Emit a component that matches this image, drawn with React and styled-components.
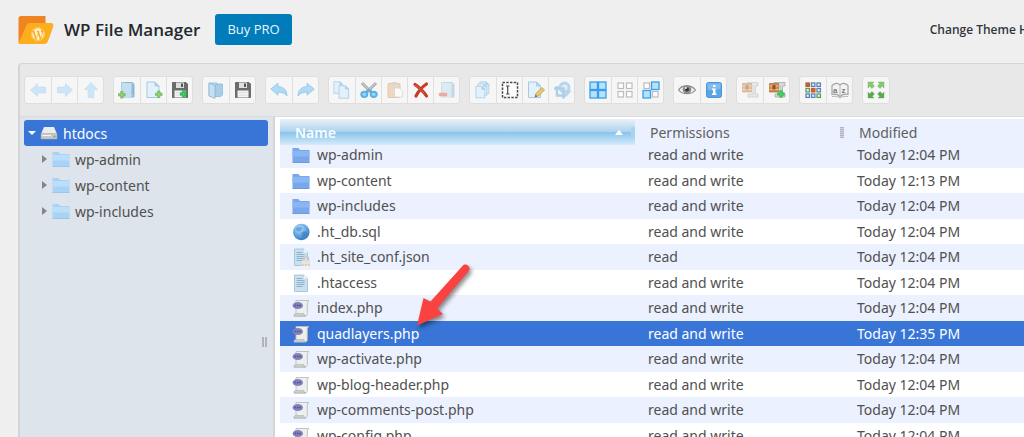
import React, { useState } from "react";
import styled, { createGlobalStyle } from "styled-components";
import { FaWordpress } from "react-icons/fa";

const GlobalStyle = createGlobalStyle`
  * {
    box-sizing: border-box;
  }

  body {
    margin: 0;
    overflow: hidden;
    background: #efefef;
  }
`;

const Page = styled.div`
  position: relative;
  overflow: hidden;
  font-family: "Noto Sans", "DejaVu Sans", sans-serif;
  font-size: 14px;
  color: #505050;
`;

const Header = styled.header`
  display: flex;
  align-items: center;
  height: 63px;
  padding: 0 0 4px 18px;
  font-family: "Open Sans", sans-serif;
`;

const Title = styled.h1`
  margin: 0 15px 0 10px;
  color: #23282d;
  font-size: 17px;
  font-weight: 600;
  white-space: nowrap;
`;

const BuyLink = styled.a`
  padding: 0 12px;
  border-radius: 3px;
  background: #007cba;
  color: #e8f5fc;
  font-size: 13px;
  line-height: 31px;
  text-decoration: none;
  white-space: nowrap;
`;

const ThemeLabel = styled.span`
  margin: 0 -4px 0 auto;
  color: #32373c;
  font-size: 12px;
  font-weight: 600;
  white-space: nowrap;
`;

const Manager = styled.main`
  margin-left: 18px;
  border: 2px solid #d4d5d7;
  border-width: 1px 0 0 2px;
  border-radius: 4px 0 0 0;
  background: #e8e8e8;
`;

const Toolbar = styled.div`
  display: flex;
  gap: 9px;
  height: 52px;
  padding: 12px 0 0 4px;
`;

const ButtonGroup = styled.div`
  display: flex;
  height: 28px;
  border: 1px solid #dedede;
  border-radius: 3px;
  background: #f6f6f6;
`;

const ToolButton = styled.button`
  display: flex;
  align-items: center;
  justify-content: center;
  width: 26px;
  padding: 0;
  border: 0;
  background: transparent;

  & + & {
    border-left: 1px solid #e0e0e0;
  }

  svg {
    flex: none;
    opacity: ${(props) => (props.$dim ? 0.5 : 1)};
  }
`;

const Workzone = styled.div`
  display: flex;
  height: 450px;
  border-top: 1px solid #dcdcdc;
`;

const Sidebar = styled.nav`
  position: relative;
  flex: none;
  width: 255px;
  padding: 3px 5px 0 4px;
  border-right: 2px solid #d3d6d9;
  background: #dde4eb;
`;

const TreeList = styled.ul`
  margin: 0;
  padding: 0;
  list-style: none;
`;

const TreeLink = styled.a`
  display: flex;
  align-items: center;
  height: 26px;
  padding-left: ${(props) => (props.$root ? 4 : 17)}px;
  border-radius: 3px;
  background: ${(props) => (props.$root ? "#3875d7" : "transparent")};
  color: ${(props) => (props.$root ? "#fff" : "#505050")};
  text-decoration: none;

  svg:first-child {
    margin-right: 4px;
  }

  span {
    margin-left: 5px;
  }
`;

const SplitHandle = styled.div`
  position: absolute;
  top: 50%;
  right: 6px;
  width: 5px;
  height: 10px;
  margin-top: -5px;
  border: solid #b2b5b8;
  border-width: 0 2px;
`;

const Listing = styled.section`
  flex: 1;
  min-width: 0;
  padding: 2px 0 0 5px;
  overflow: hidden;
  background: #fff;
`;

const Table = styled.table`
  width: 100%;
  table-layout: fixed;
  border-collapse: collapse;
`;

const HeadCell = styled.th`
  width: ${(props) => props.$width || "auto"};
  height: 26px;
  padding: 0;
  background: ${(props) =>
    props.$active
      ? "linear-gradient(#ebf1f6 0%, #abd3ee 50%, #89c3eb 51%, #d5ebfb 100%)"
      : "#ebf1fe"};
  color: ${(props) => (props.$active ? "#f8fcff" : "#606060")};
  font-weight: ${(props) => (props.$active ? 600 : 400)};
  text-align: left;
`;

const HeadInner = styled.div`
  display: flex;
  align-items: center;
  padding-left: 15px;

  i {
    width: 4px;
    height: 11px;
    margin-left: auto;
    background: repeating-linear-gradient(#b0b4bc 0 1px, #d0d4dc 1px 2px);
  }

  svg {
    margin: 0 8px 0 auto;
  }

  svg + i {
    margin-left: 0;
    background: #a8d4f2;
  }
`;

const Row = styled.tr`
  height: 25px;
  background: #fff;

  &:nth-child(odd) {
    height: 26px;
    background: #ebf1fe;
  }

  &:first-child {
    height: 23px;
  }

  &&.selected {
    background: #3875d7;
    color: #fff;
  }
`;

const Cell = styled.td`
  padding: 0 0 0 13px;
  line-height: 20px;
  white-space: nowrap;

  ${Row}:first-child & {
    padding-bottom: 3px;
  }
`;

const FileName = styled.div`
  display: flex;
  align-items: center;
  gap: 7px;
  margin-left: -1px;
`;

const Pointer = styled.svg`
  position: absolute;
  top: 258px;
  left: 410px;
  filter: drop-shadow(2px 3px 2px rgba(0, 0, 0, 0.45));
  pointer-events: none;
`;

const Svg = ({ children }) => (
  <svg width="18" height="18" viewBox="0 0 18 18" aria-hidden="true">
    {children}
  </svg>
);

const Plus = ({ x, y, fill = "#8fcf74", edge = "#64ab50" }) => (
  <path
    d={`M${x - 1.2} ${y - 3.3}h2.4v2.1h2.1v2.4h-2.1v2.1h-2.4v-2.1h-2.1v-2.4h2.1z`}
    fill={fill}
    stroke={edge}
    strokeWidth=".6"
  />
);

const Arrow = ({ turn = 0 }) => (
  <Svg>
    <path
      d="M1.500 9l7-6.500v3.600H16.500v5.800H8.500V15.500z"
      fill="#a5d8f8"
      stroke="#8cc3e6"
      strokeWidth=".7"
      transform={`rotate(${turn} 9 9)`}
    />
  </Svg>
);

const FolderBook = ({ children }) => (
  <Svg>
    <path d="M3.500 1.500h11l1.500 1.500v13H3.500z" fill="#a9cde6" stroke="#7fabc9" strokeWidth=".8" />
    <path d="M3.500 1.500l9.500 1v14H3.500z" fill="#c3dff0" />
    <path d="M15 3.500V14" stroke="#7ba9c8" />
    {children}
  </Svg>
);

const Sheet = ({ x = 0, y = 0, s = 1 }) => (
  <g transform={`translate(${x} ${y}) scale(${s})`}>
    <path d="M2.500 1h8l4 4v11.500h-12z" fill="#e2f1fb" stroke="#9cc5df" strokeWidth=".9" />
    <path d="M10.500 1v4h4z" fill="#b5d7ed" stroke="#9cc5df" strokeWidth=".7" />
  </g>
);

const Floppy = ({ children }) => (
  <Svg>
    <path d="M1.500 1.500H15L16.500 3v13.500h-15z" fill="#6c6c6c" stroke="#5a5a5a" strokeWidth=".8" />
    <path d="M5 1.500h8v5.500H5z" fill="#dedede" />
    <path d="M10 2.500h2v3.500h-2z" fill="#555" />
    <path d="M3.500 9.500h11v7h-11z" fill="#f4f4f4" />
    <path d="M4.500 11.500h9M4.500 14h9" stroke="#d4d4d4" strokeWidth=".8" />
    {children}
  </Svg>
);

const Curve = ({ flip }) => (
  <Svg>
    <path
      d="M.8 8L8 2.200v3.400c5.500.2 9 3.400 9 9.400C14.800 12 12 11.200 8 11.200v3z"
      fill="#b0d9f4"
      stroke="#94c5e6"
      strokeWidth=".8"
      transform={flip ? "translate(18 0) scale(-1 1)" : undefined}
    />
  </Svg>
);

const Archive = ({ children }) => (
  <Svg>
    <path d="M6 1.500h11v3.500h-2.500v8H17v3H7v-3h5V5H6z" fill="#dadada" stroke="#a0a0a0" strokeWidth=".7" />
    <path d="M1.500 2.500h9v8.500h-9z" fill="#d38a48" stroke="#ab6a35" strokeWidth=".7" />
    <path d="M1.500 5h9M1.500 8.500h9" stroke="#f1c48a" />
    <path d="M4.500 4h3v4.500h-3z" fill="#8a5730" />
    {children}
  </Svg>
);

const Squares = ({ on }) => (
  <Svg>
    {[[2, 2], [10.5, 2], [2, 10.5], [10.5, 10.5]].map(([x, y], i) =>
      on.includes(i) ? (
        <rect key={i} x={x - 1} y={y - 1} width="7.500" height="7.500" fill="#b5e1fc" stroke="#3d9ee6" strokeWidth="1.300" />
      ) : (
        <rect key={i} x={x} y={y} width="5.500" height="5.500" fill="#fff" stroke="#bcbcbc" strokeWidth="1.200" />
      )
    )}
  </Svg>
);

const gridColors = ["#b9603c", "#5b83b5", "#5b83b5", "#5ba05b", "#c5622e", "#5b83b5", "#5b83b5", "#5b83b5", "#5ba05b"];

const icons = {
  back: <Arrow />,
  forward: <Arrow turn={180} />,
  up: <Arrow turn={90} />,
  mkdir: <FolderBook><Plus x={3.8} y={13.8} /></FolderBook>,
  mkfile: <Svg><Sheet x={-0.5} /><Plus x={13.8} y={13.3} /></Svg>,
  upload: <Floppy><Plus x={12.5} y={13} fill="#35d160" edge="#1da03f" /></Floppy>,
  open: (
    <Svg>
      <path d="M2 2h8v13H2z" fill="#b5d7ec" stroke="#8fb9d5" strokeWidth=".8" />
      <path d="M8 4.500L11 3h4.500v11l-2 1.500H8z" fill="#a8cde6" stroke="#8fb9d5" strokeWidth=".8" />
      <path d="M2 2l6 2.500v13L2 15z" fill="#c5e0f1" stroke="#8fb9d5" strokeWidth=".8" />
    </Svg>
  ),
  save: <Floppy />,
  undo: <Curve />,
  redo: <Curve flip />,
  copy: <Svg><Sheet x={-1} y={0} s={0.75} /><Sheet x={4} y={4} s={0.8} /></Svg>,
  cut: (
    <Svg>
      <path d="M2 2l9.500 9.500M16 2L6.500 11.500" stroke="#a8a8a8" strokeWidth="3" />
      <path d="M2.500 2l8 8.500M15.500 2l-8 8.500" stroke="#dcdcdc" strokeWidth="1" />
      <ellipse cx="4.300" cy="13.300" rx="3" ry="2.600" fill="#9ad4f8" stroke="#5cb0e4" strokeWidth="2" />
      <ellipse cx="13.700" cy="13.300" rx="3" ry="2.600" fill="#9ad4f8" stroke="#5cb0e4" strokeWidth="2" />
      <path d="M6 11l3-2 3 2" fill="none" stroke="#5cb0e4" strokeWidth="2.200" />
    </Svg>
  ),
  paste: (
    <Svg>
      <rect x="2" y="2.500" width="12" height="14" rx="1" fill="#e8b98a" stroke="#cb9867" />
      <rect x="5" y="1" width="6" height="3" rx="1" fill="#bcbcbc" />
      <path d="M8.500 7h5l3 3v6h-8z" fill="#fff" stroke="#b8b8b8" strokeWidth=".8" />
    </Svg>
  ),
  rm: (
    <Svg>
      <path d="M3 3.500C6 5 12 11 14.500 15M14.500 3C10 6 6 11 4 15" fill="none" stroke="#c83a2b" strokeWidth="3.200" strokeLinecap="round" />
      <path d="M3 4c3.500 2 7 5.500 9 8" fill="none" stroke="#e4604c" strokeWidth="1" />
    </Svg>
  ),
  empty: <FolderBook><rect x="1" y="12" width="8" height="3" rx="1" fill="#f0614e" stroke="#d84a3a" strokeWidth=".5" /></FolderBook>,
  duplicate: <Svg><Sheet x={4} y={0} s={0.75} /><Sheet x={2} y={2} s={0.75} /><Sheet x={0} y={4.5} s={0.75} /></Svg>,
  rename: (
    <Svg>
      <rect x="1.500" y="1.500" width="15" height="15" fill="#fdfdfd" stroke="#4a4a4a" strokeWidth="1.500" strokeDasharray="2.400 1.350" />
      <path d="M5 5h3.500M5 13h3.500M6.700 5v8" stroke="#4a4a4a" strokeWidth="1.200" />
    </Svg>
  ),
  edit: (
    <Svg>
      <Sheet x={-1} />
      <path d="M8 16l1-3.500 6-6 2.500 2.500-6 6z" fill="#edc968" stroke="#b0904a" strokeWidth=".7" />
      <path d="M8 16l.7-2.300 1.600 1.600z" fill="#555" />
    </Svg>
  ),
  resize: (
    <Svg>
      <circle cx="11.500" cy="6.500" r="4.500" fill="#cfe6f7" stroke="#7ab6e4" strokeWidth="3" />
      <path d="M4 5v9.500h9.500M1 7.500h9.500v10" fill="none" stroke="#6aabdd" strokeWidth="2.600" />
      <path d="M13 14l4-5" stroke="#7ab6e4" strokeWidth="3" />
    </Svg>
  ),
  all: <Squares on={[0, 1, 2, 3]} />,
  none: <Squares on={[]} />,
  invert: <Squares on={[1, 2]} />,
  preview: (
    <Svg>
      <path d="M.5 9C4 3.500 13.500 3.500 17.500 9c-4 5-13 5-17 0z" fill="#eee" stroke="#8b8b8b" strokeWidth="1.200" />
      <circle cx="9" cy="8.500" r="4.300" fill="#8a8a8a" />
      <circle cx="9" cy="8.500" r="2" fill="#333" />
      <circle cx="7.800" cy="7" r="1" fill="#fff" />
    </Svg>
  ),
  info: (
    <Svg>
      <rect x="1.500" y="1.500" width="15" height="15" rx="2" fill="#5ba5e3" stroke="#4f92d2" />
      <path d="M2.500 2.500h13v5c-5 2-9 2-13 1z" fill="#7fbdf0" />
      <path d="M8 4h2.500v2H8zM7 7.500h3.500v5h1V14H7v-1.500h1V9H7z" fill="#fff" />
    </Svg>
  ),
  extract: <Archive />,
  archive: <Archive><Plus x={13} y={13} fill="#41d562" edge="#25a843" /></Archive>,
  view: (
    <Svg>
      {gridColors.map((color, i) => (
        <rect key={i} x={2 + (i % 3) * 5.5} y={2 + Math.floor(i / 3) * 5.5} width="3.400" height="3.400" fill={i === 0 || i === 4 ? color : "#eef4fa"} stroke={color} strokeWidth="1.300" />
      ))}
    </Svg>
  ),
  sort: (
    <Svg>
      <path d="M1 4.500C4 2 7 2 9 4c2-2 5-2 8 .5v9c-3-.8-5.500-.3-8 2-2.500-2.300-5-2.800-8-2z" fill="#f4f4f4" stroke="#a2a2a2" strokeWidth="1.200" />
      <path d="M9 4v11M1 15.500c4-.5 6 0 8 1.500 2-1.500 4-2 8-1.500" fill="none" stroke="#b5b5b5" />
      <text x="2" y="12" fontSize="8" fontWeight="700" fill="#777">a</text>
      <text x="10.500" y="12" fontSize="8" fontWeight="700" fill="#777">z</text>
    </Svg>
  ),
  fullscreen: (
    <Svg>
      {[0, 90, 180, 270].map((turn) => (
        <path key={turn} d="M1 1h6L5.300 2.700 7.500 5 5 7.500 2.700 5.300 1 7z" fill={turn < 180 ? "#85ca75" : "#5aa84f"} stroke="#65ab5a" strokeWidth=".4" transform={`rotate(${turn} 9 9)`} />
      ))}
    </Svg>
  ),
};

const Folder = ({ light }) => (
  <Svg>
    <path d="M.5 2h6L8 4h9.500v12.500H.5z" fill={light ? "#a9d2f4" : "#78a8eb"} />
    <path d="M.5 5h17v5.500H.5z" fill={light ? "#bbdffb" : "#8ab6f3"} />
    <path d="M.5 16.500h17" stroke={light ? "#9cc7ea" : "#7099d8"} />
  </Svg>
);

const Drive = () => (
  <Svg>
    <path d="M4 3h10l3 7H1z" fill="#ececec" />
    <path d="M1 9.500h16v5.500H1z" fill="#c8c8c8" stroke="#aaa" strokeWidth=".6" />
    <path d="M2 11.500h9" stroke="#f4f4f4" />
    <circle cx="14.500" cy="12.500" r="1" fill="#5fae50" />
  </Svg>
);

const TextFile = ({ locked }) => (
  <Svg>
    <path d="M2.500 1h9.500l3.500 3.500v13h-13z" fill="#c9e0ef" stroke="#9dbfd5" strokeWidth=".8" />
    <path d="M12 1v3.500h3.500z" fill="#f0f8fd" />
    <path d="M4.500 4.500h6M4.500 6.500h8M4.500 8.500h8M4.500 10.500h8M4.500 12.500h6" stroke="#7fa6c1" strokeWidth=".8" />
    {locked && (
      <>
        <path d="M11.500 13v-2.500c0-3 5-3 5 0V13" fill="none" stroke="#c9c9c9" strokeWidth="1.500" />
        <path d="M10 12.500h8v5.500h-8z" fill="#e8e4da" />
        <path d="M10 17h8" stroke="#dcc37a" strokeDasharray="2 1" />
      </>
    )}
  </Svg>
);

const Globe = () => (
  <Svg>
    <defs>
      <radialGradient id="globe" cx=".4" cy=".3" r=".75">
        <stop offset="0" stopColor="#b4def9" />
        <stop offset=".6" stopColor="#5aa2df" />
        <stop offset="1" stopColor="#2f6fb0" />
      </radialGradient>
    </defs>
    <circle cx="9.300" cy="9" r="8.300" fill="url(#globe)" />
    <path d="M4 6c2-3 5-2 6-1s-1 2-2 3-3 0-4-2zM10 9c2-1 4-1 5 0s-1 4-3 5-3-3-2-5z" fill="#2f76bd" opacity=".5" />
  </Svg>
);

const PhpFile = () => (
  <Svg>
    <path d="M4 1.500H17c-1.500.8-1.700 2-1.700 3.500v9.500c0 1.500-.8 2.500-2 2.500H2c1.500-.5 2-1.500 2-3z" fill="#eef0ee" stroke="#b8bebb" strokeWidth=".9" />
    <path d="M2 17c-.5-2 1-2.500 2-2.300h8c0 1.300.3 2 1.500 2.300z" fill="#d2d7d5" stroke="#a4aaa7" strokeWidth=".7" />
    <ellipse cx="5.800" cy="6.500" rx="5.200" ry="3.600" fill="#8183bd" />
    <path d="M2.500 6.500h6.500" stroke="#52548f" strokeWidth="1.500" strokeDasharray="1.600 .8" />
  </Svg>
);

const fileIcons = {
  folder: <Folder />,
  sql: <Globe />,
  text: <TextFile />,
  locked: <TextFile locked />,
  php: <PhpFile />,
};

const toolGroups = [
  [["back", 1], ["forward", 1], ["up", 1]],
  [["mkdir"], ["mkfile"], ["upload"]],
  [["open"], ["save"]],
  [["undo"], ["redo"]],
  [["copy"], ["cut"], ["paste", 1], ["rm"], ["empty", 1]],
  [["duplicate"], ["rename"], ["edit"], ["resize", 1]],
  [["all"], ["none"], ["invert"]],
  [["preview"], ["info"]],
  [["extract", 1], ["archive"]],
  [["view"], ["sort"]],
  [["fullscreen"]],
];

const files = [
  { name: "wp-admin", type: "folder" },
  { name: "wp-content", type: "folder", time: "12:13 PM" },
  { name: "wp-includes", type: "folder" },
  { name: ".ht_db.sql", type: "sql" },
  { name: ".ht_site_conf.json", type: "locked", perm: "read" },
  { name: ".htaccess", type: "text" },
  { name: "index.php", type: "php" },
  { name: "quadlayers.php", type: "php", time: "12:35 PM" },
  { name: "wp-activate.php", type: "php" },
  { name: "wp-blog-header.php", type: "php" },
  { name: "wp-comments-post.php", type: "php" },
  { name: "wp-config.php", type: "php" },
];

const Logo = () => (
  <svg width="36" height="30" viewBox="0 0 36 30" aria-hidden="true">
    <path d="M3 1h24.500v7L18 29H3a2.500 2.500 0 0 1-2.500-2.500v-23A2.500 2.500 0 0 1 3 1z" fill="#f08423" />
    <path d="M11.500 8H33a2.500 2.500 0 0 1 2.300 3.400L30 26a4.500 4.500 0 0 1-4.200 3H2c-1.200 0-1.500-.8-1.100-1.800L8.800 9.800C9.400 8.500 10 8 11.500 8z" fill="#fcae1c" />
    <FaWordpress x="13" y="12" width="13" height="13" color="#fff3d8" />
  </svg>
);

const Tree = () => (
  <TreeList>
    <li>
      <TreeLink href="#htdocs" $root>
        <svg width="8" height="6" viewBox="0 0 8 6"><path d="M0 1h8L4 5z" fill="#fff" /></svg>
        <Drive />
        <span>htdocs</span>
      </TreeLink>
      <TreeList>
        {["wp-admin", "wp-content", "wp-includes"].map((name) => (
          <li key={name}>
            <TreeLink href={`#${name}`}>
              <svg width="7" height="8" viewBox="0 0 7 8"><path d="M1 0v8l5-4z" fill="#858585" /></svg>
              <Folder light />
              <span>{name}</span>
            </TreeLink>
          </li>
        ))}
      </TreeList>
    </li>
  </TreeList>
);

const FileTable = () => {
  const [selected, setSelected] = useState("quadlayers.php");

  return (
    <Table>
      <thead>
        <tr>
          <HeadCell $width="355px" $active>
            <HeadInner>
              Name
              <svg width="8" height="5" viewBox="0 0 8 5"><path d="M0 5h8L4 0z" fill="#fff" /></svg>
              <i />
            </HeadInner>
          </HeadCell>
          <HeadCell $width="209px"><HeadInner>Permissions<i /></HeadInner></HeadCell>
          <HeadCell><HeadInner>Modified</HeadInner></HeadCell>
        </tr>
      </thead>
      <tbody>
        {files.map(({ name, type, perm = "read and write", time = "12:04 PM" }) => (
          <Row
            key={name}
            className={name === selected ? "selected" : undefined}
            onClick={() => setSelected(name)}
          >
            <Cell><FileName>{fileIcons[type]}{name}</FileName></Cell>
            <Cell>{perm}</Cell>
            <Cell>Today {time}</Cell>
          </Row>
        ))}
      </tbody>
    </Table>
  );
};

export default function App() {
  return (
    <Page>
      <GlobalStyle />
      <Header>
        <Logo />
        <Title>WP File Manager</Title>
        <BuyLink href="#pro">Buy PRO</BuyLink>
        <ThemeLabel>Change Theme H</ThemeLabel>
      </Header>
      <Manager>
        <Toolbar role="toolbar">
          {toolGroups.map((group) => (
            <ButtonGroup key={group[0][0]}>
              {group.map(([name, dim]) => (
                <ToolButton key={name} type="button" aria-label={name} $dim={dim}>
                  {icons[name]}
                </ToolButton>
              ))}
            </ButtonGroup>
          ))}
        </Toolbar>
        <Workzone>
          <Sidebar>
            <Tree />
            <SplitHandle />
          </Sidebar>
          <Listing>
            <FileTable />
          </Listing>
        </Workzone>
      </Manager>
      <Pointer width="70" height="75" viewBox="0 0 70 75" aria-hidden="true">
        <path d="M7 67.500L13.500 40l7 3.500L52.500 8c3-4 9 .5 6.500 4.500L27 50.500l6 5.500z" fill="#fa4340" />
      </Pointer>
    </Page>
  );
}
